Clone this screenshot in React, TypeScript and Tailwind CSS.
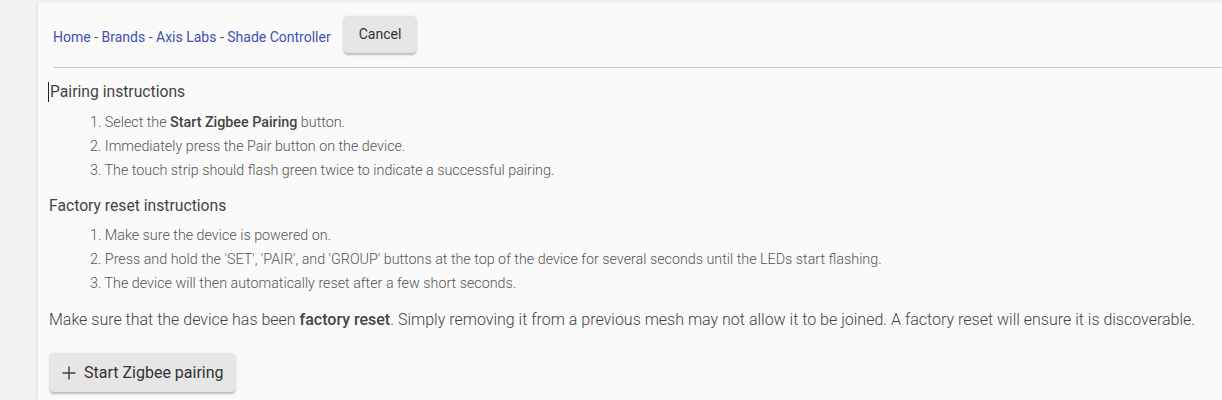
import React from 'react'

const font = { fontFamily: 'Roboto, "Liberation Sans", sans-serif' }

const Crumb = ({ children }: { children: React.ReactNode }) => (
  <a href="#" className="text-[#3f51b5] hover:underline">{children}</a>
)

const Sep = () => <span className="text-[#555]"> - </span>

export default function App() {
  const pairing = [
    <>Select the <b className="font-medium text-[#444]">Start Zigbee Pairing</b> button.</>,
    <>Immediately press the Pair button on the device.</>,
    <>The touch strip should flash green twice to indicate a successful pairing.</>,
  ]
  const reset = [
    <>Make sure the device is powered on.</>,
    <>Press and hold the 'SET', 'PAIR', and 'GROUP' buttons at the top of the device for several seconds until the LEDs start flashing.</>,
    <>The device will then automatically reset after a few short seconds.</>,
  ]

  return (
    <div className="min-h-[400px] bg-[#f2f2f2] pt-[2px] pl-[38px]" style={font}>
      <div className="min-h-[398px] bg-[#fafafa] shadow-[-1px_0_2px_rgba(0,0,0,0.08)]">
        {/* header */}
        <div className="flex items-center pl-[15px] pt-[14px] pb-[14px]">
          <div className="text-[14px] mt-[5px]">
            <Crumb>Home</Crumb><Sep /><Crumb>Brands</Crumb><Sep /><Crumb>Axis Labs</Crumb><Sep /><Crumb>Shade Controller</Crumb>
          </div>
          <button className="ml-[13px] h-[37px] px-[15px] rounded bg-[#e6e6e6] text-[14px] text-[#333] shadow-[0_2px_2px_rgba(0,0,0,0.2),0_1px_4px_rgba(0,0,0,0.1)]">
            Cancel
          </button>
        </div>
        <div className="ml-[15px] h-px bg-[#cccccc]" />

        <div className="pl-[11px] pt-[14px]">
          <h3 className="text-[15.7px] font-normal text-[#444] leading-5 border-l border-[#222] pl-px -ml-px">Pairing instructions</h3>
          <ol className="mt-[8px] pl-[41px] text-[14.3px] font-light text-[#555] leading-6">
            {pairing.map((p, i) => (
              <li key={i}>{i + 1}. {p}</li>
            ))}
          </ol>
          <h3 className="mt-[14px] text-[15.7px] font-normal text-[#444] leading-5">Factory reset instructions</h3>
          <ol className="mt-[7px] pl-[41px] text-[14.3px] font-light text-[#555] leading-6">
            {reset.map((p, i) => (
              <li key={i}>{i + 1}. {p}</li>
            ))}
          </ol>
          <p className="mt-[13px] text-[16px] font-light text-[#444] leading-6">
            Make sure that the device has been <b className="font-medium text-[#444]">factory reset</b>. Simply removing it from a previous mesh may not allow it to be joined. A factory reset will ensure it is discoverable.
          </p>
          <button className="mt-[21px] ml-px flex items-center gap-[8px] h-[39px] w-[185px] pl-[12px] rounded bg-[#e6e6e6] text-[16px] text-[#333] shadow-[0_2px_2px_rgba(0,0,0,0.2),0_1px_4px_rgba(0,0,0,0.1)]">
            <svg width="14" height="14" viewBox="0 0 14 14" className="text-[#444]">
              <path d="M7 0.5v13M0.5 7h13" stroke="currentColor" strokeWidth="1.5" fill="none" />
            </svg>
            Start Zigbee pairing
          </button>
        </div>
      </div>
    </div>
  )
}
